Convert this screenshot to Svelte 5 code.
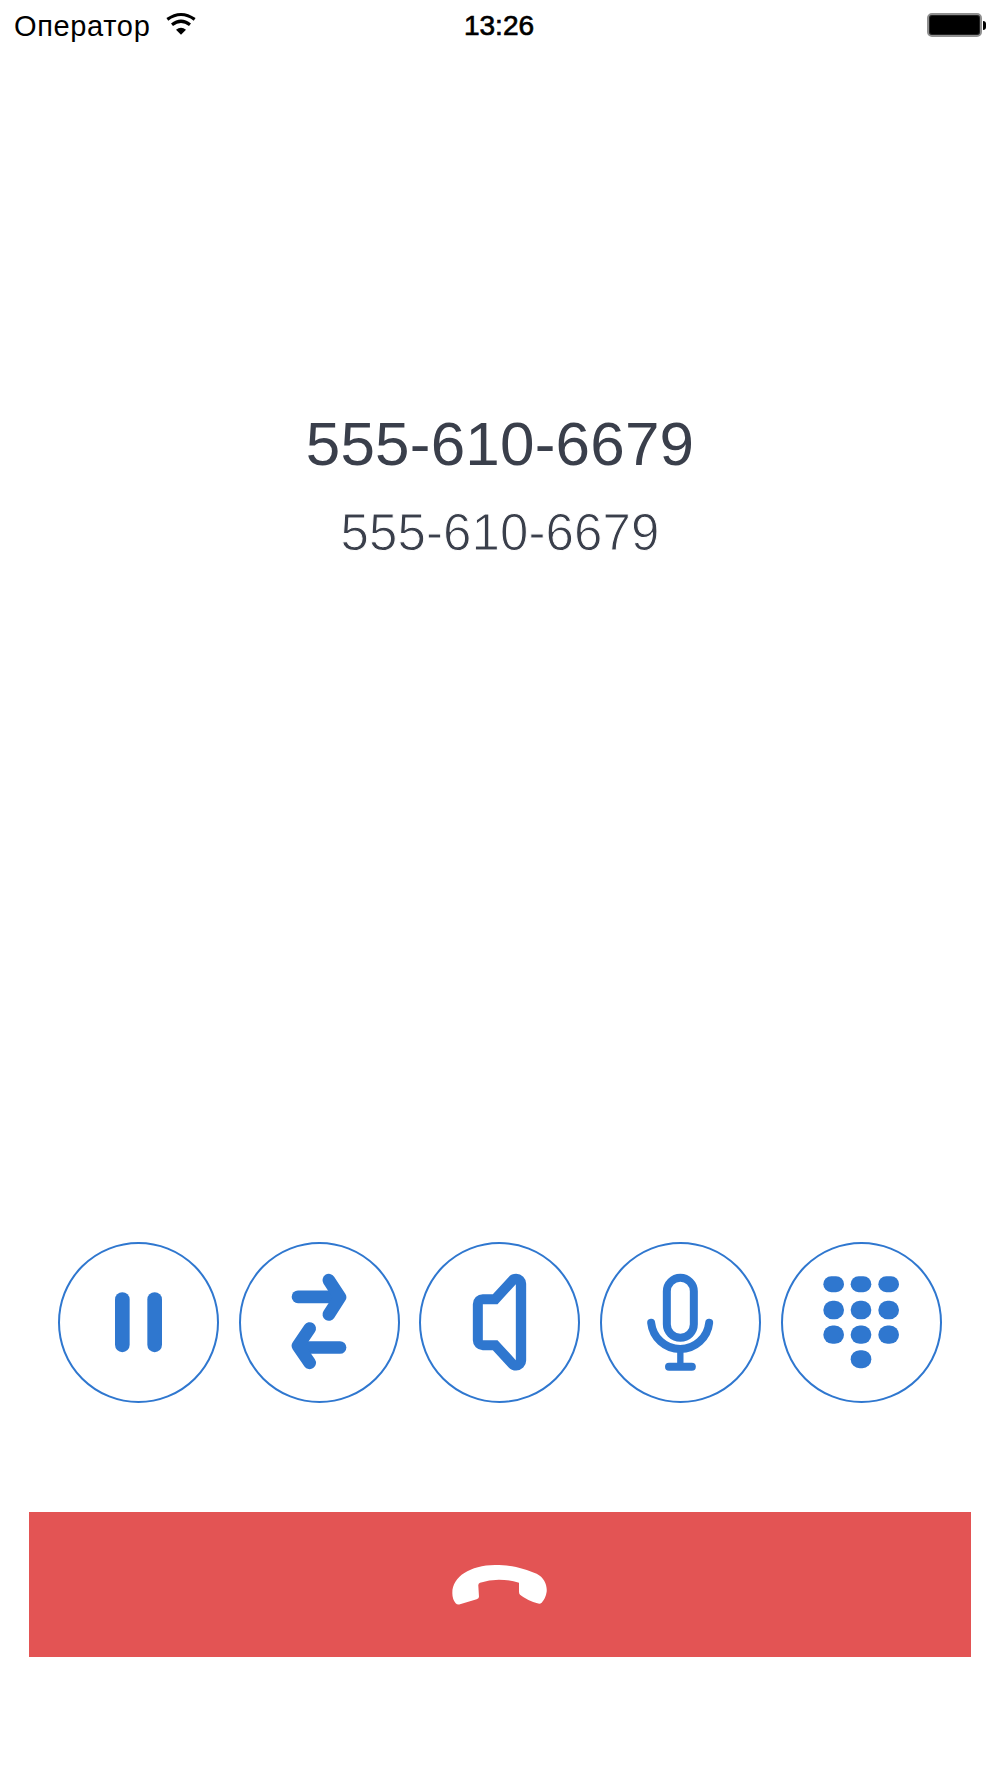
<script lang="ts">
    export let carrier: string = 'Оператор';
    export let time: string = '13:26';
    export let name: string = '555-610-6679';
    export let phone: string = '555-610-6679';

    const cols = [160, 242, 325];
    const rows = [
        { y: 138, h: 48 },
        { y: 212, h: 55 },
        { y: 286, h: 55 },
    ];
</script>

<div class="screen">
    <header class="status">
        <div class="carrier">
            <span>{carrier}</span>
            <svg class="wifi" viewBox="500 36 90 69" fill="none" stroke="#000">
                <path d="M504 58Q545 29 586 58" stroke-width="9.5"/>
                <path d="M518 74.5Q545 53 572 74.5" stroke-width="9.5"/>
                <path d="M530 89.5Q545 77 560 89.5L545 104Z" fill="#000" stroke="none"/>
            </svg>
        </div>
        <div class="time">{time}</div>
        <div class="battery">
            <div class="level"></div>
            <div class="nub"></div>
        </div>
    </header>

    <section class="contact">
        <h1>{name}</h1>
        <p>{phone}</p>
    </section>

    <section class="actions">
        <button aria-label="Hold">
            <svg viewBox="24 35.5 483 483">
                <rect x="195" y="186" width="44" height="180" rx="22"/>
                <rect x="292" y="186" width="44" height="180" rx="22"/>
            </svg>
        </button>
        <button aria-label="Transfer">
            <svg class="line" viewBox="27 35.5 483 483" stroke-width="38">
                <path d="M204 200H320"/>
                <path d="M296.5 150L330 201L296.5 253"/>
                <path d="M330 352H214"/>
                <path d="M239 295L204 347L239 398"/>
            </svg>
        </button>
        <button aria-label="Speaker">
            <svg viewBox="28.5 35.5 483 483">
                <path fill-rule="evenodd" d="M220 192H250L297 141Q306 131 320 131A30 30 0 0 1 350 161V391A30 30 0 0 1 320 421Q306 421 297 411L250 360H220A30 30 0 0 1 190 330V222A30 30 0 0 1 220 192ZM220 222V330H264L319 390V162L264 222Z"/>
            </svg>
        </button>
        <button aria-label="Mute">
            <svg class="line" viewBox="30.5 35.5 483 483" stroke-width="24">
                <rect x="231" y="143" width="81" height="180" rx="40.5"/>
                <path d="M184 278A87.5 88 0 0 0 358 278"/>
                <path d="M271.5 368V408" stroke-width="19"/>
                <path d="M237.5 409.5H306"/>
            </svg>
        </button>
        <button aria-label="Keypad">
            <svg viewBox="33 35.5 483 483">
                {#each rows as row}
                    {#each cols as x}
                        <rect {x} y={row.y} width="62" height={row.h} rx={row.h / 2}/>
                    {/each}
                {/each}
                <rect x="242" y="360" width="62" height="54" rx="27"/>
            </svg>
        </button>
    </section>

    <button class="hangup" aria-label="End call">
        <svg viewBox="0 0 420 270">
            <path d="M67 160C66 110 120 76 195 75C250 75 285 87 320 101C342 112 352 135 350 155Q347 175 335 188Q330 193 322 190Q290 180 270 164Q267 161 267 155V128Q205 110 150 128Q144 131 145 138L147 170Q147 175 140 178L90 193Q82 195 77 190Q67 178 67 160Z"/>
        </svg>
    </button>
</div>

<style>
    :global(body) {
        margin: 0;
        background: #fff;
    }

    .screen {
        --blue: #2f77cf;
        box-sizing: border-box;
        width: 1000px;
        height: 1778px;
        display: flex;
        flex-direction: column;
        background: #fff;
        font-family: "Liberation Sans", Arial, sans-serif;
    }

    .status {
        height: 50px;
        padding: 0 14px;
        box-sizing: border-box;
        display: grid;
        grid-template-columns: 1fr auto 1fr;
        align-items: center;
        color: #000;
        font-size: 29px;
        line-height: 50px;
    }

    .carrier {
        display: flex;
        align-items: center;
        gap: 16px;
        letter-spacing: .65px;
    }

    .carrier span {
        padding-top: 2px;
        line-height: 48px;
    }

    .wifi {
        width: 30px;
        height: 23px;
        margin-bottom: 3px;
    }

    .time {
        padding: 2px 2px 0 0;
        font-size: 28px;
        line-height: 48px;
        -webkit-text-stroke: .7px #000;
    }

    .battery {
        display: flex;
        align-items: center;
        justify-self: end;
        gap: 1px;
    }

    .level {
        box-sizing: border-box;
        width: 55px;
        height: 24px;
        border: 2px solid #909090;
        border-radius: 5px;
        background: #000;
        box-shadow: inset 0 0 0 1px #222;
    }

    .nub {
        width: 3px;
        height: 9px;
        border-radius: 0 4px 4px 0;
        background: #000;
    }

    .contact {
        margin-top: 358px;
        text-align: center;
        color: #3a3f4b;
    }

    h1 {
        margin: 0;
        font-size: 62px;
        font-weight: 400;
        line-height: 72px;
        letter-spacing: .2px;
    }

    p {
        margin: 23px 0 0;
        font-size: 51px;
        line-height: 60px;
        letter-spacing: .1px;
        /* thins the digits down to a light weight */
        -webkit-text-stroke: 1px #fff;
    }

    button {
        padding: 0;
        border: none;
        background: none;
        cursor: pointer;
    }

    .actions {
        margin: 679px 58.3px 0 57.8px;
        display: flex;
        justify-content: space-between;
    }

    .actions button {
        box-sizing: border-box;
        width: 161px;
        height: 161px;
        border: 2px solid var(--blue);
        border-radius: 50%;
    }

    .actions svg {
        display: block;
        width: 161px;
        height: 161px;
        margin: -2px;
        fill: var(--blue);
    }

    .actions .line {
        fill: none;
        stroke: var(--blue);
        stroke-linecap: round;
        stroke-linejoin: round;
    }

    .hangup {
        height: 145px;
        margin: 109px 29px 0;
        display: flex;
        align-items: center;
        justify-content: center;
        background: #e35454;
    }

    .hangup svg {
        width: 140px;
        height: 90px;
        fill: #fff;
    }
</style>
